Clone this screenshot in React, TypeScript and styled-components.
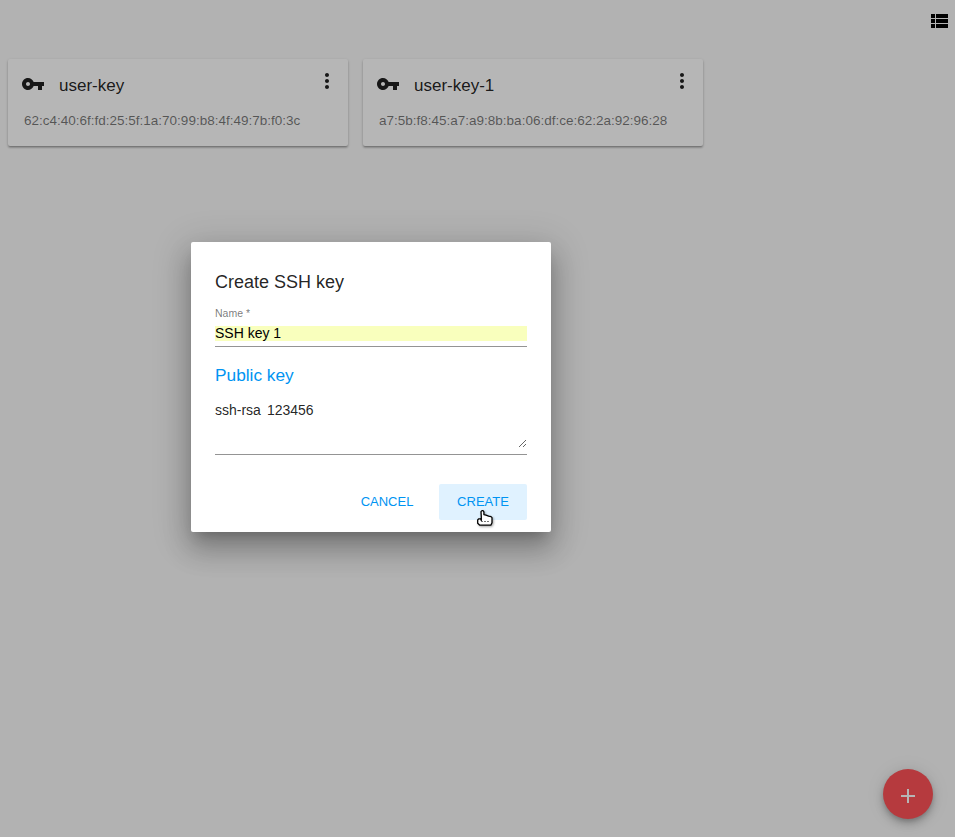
import React from 'react';
import styled, { createGlobalStyle } from 'styled-components';

const GlobalStyle = createGlobalStyle`
  *, *::before, *::after { box-sizing: border-box; }
  html, body { margin: 0; height: 100%; overflow: hidden; }
  body {
    background: #fafafa;
    color: rgba(0, 0, 0, 0.87);
    font-family: "Liberation Sans", Arial, sans-serif;
  }
  button { border: 0; padding: 0; background: none; font-family: inherit; color: inherit; cursor: pointer; }
`;

const Page = styled.div`
  position: relative;
  height: 100vh;
  overflow: hidden;
`;

const Toolbar = styled.header`
  display: flex;
  justify-content: flex-end;
  align-items: flex-start;
  height: 59px;
  padding: 9px 3px 0 0;
`;

const ViewToggle = styled.button`
  display: flex;
  color: #000;
`;

const CardGrid = styled.main`
  display: flex;
  gap: 15px;
  padding: 0 8px;
`;

const Card = styled.article`
  width: 340px;
  height: 87px;
  padding: 13px 9px 0 13px;
  background: #fff;
  border-radius: 2px;
  box-shadow: 0 1px 3px 0 rgba(0, 0, 0, 0.2), 0 2px 2px 0 rgba(0, 0, 0, 0.14),
    0 2px 1px -1px rgba(0, 0, 0, 0.12);
`;

const CardHeader = styled.div`
  display: flex;
  align-items: flex-start;
  height: 40px;
`;

const CardTitle = styled.h2`
  flex: 1;
  margin: 4px 0 0 14px;
  font-size: 17px;
  font-weight: 400;
  line-height: 20px;
`;

const MenuButton = styled.button`
  display: flex;
  margin-top: -3px;
`;

const Fingerprint = styled.p`
  margin: 0 0 0 3px;
  font-size: 13.5px;
  line-height: 18px;
  color: rgba(0, 0, 0, 0.54);
  white-space: nowrap;
`;

const AddButton = styled.button`
  position: absolute;
  right: 22px;
  bottom: 18px;
  display: grid;
  place-items: center;
  width: 50px;
  height: 50px;
  padding-top: 4px;
  border-radius: 50%;
  background: #ff5257;
  box-shadow: 0 3px 5px -1px rgba(0, 0, 0, 0.2), 0 6px 10px 0 rgba(0, 0, 0, 0.14),
    0 1px 18px 0 rgba(0, 0, 0, 0.12);
`;

const Backdrop = styled.div`
  position: absolute;
  inset: 0;
  background: rgba(0, 0, 0, 0.288);
`;

const Dialog = styled.form`
  position: absolute;
  left: 191px;
  top: 242px;
  display: flex;
  flex-direction: column;
  width: 360px;
  height: 290px;
  padding: 28px 24px 12px;
  background: #fff;
  border-radius: 2px;
  box-shadow: 0 9px 12px -6px rgba(0, 0, 0, 0.2), 0 17px 27px 2px rgba(0, 0, 0, 0.2),
    0 7px 36px 6px rgba(0, 0, 0, 0.14);
`;

const DialogTitle = styled.h1`
  margin: 0;
  font-size: 18px;
  font-weight: 400;
  line-height: 24px;
`;

const NameField = styled.div`
  display: flex;
  flex-direction: column;
  height: 53px;
  padding-top: 13px;
  border-bottom: 1px solid #949494;
`;

const NameLabel = styled.label`
  font-size: 10.5px;
  line-height: 12px;
  height: 19px;
  color: rgba(0, 0, 0, 0.54);
`;

const NameInput = styled.input`
  width: 100%;
  height: 15px;
  padding: 0;
  border: 0;
  outline: 0;
  background: #f9ffbd;
  color: #000;
  font: 14px/15px "Liberation Sans", Arial, sans-serif;
`;

const KeyField = styled.div`
  height: 108px;
  padding-top: 17px;
  border-bottom: 1px solid #949494;
`;

const KeyLabel = styled.label`
  display: block;
  height: 38px;
  font-size: 17.3px;
  line-height: 22px;
  color: #0094f2;
`;

const KeyInput = styled.textarea`
  display: block;
  width: 100%;
  height: 46px;
  padding: 0;
  border: 0;
  outline: 0;
  resize: vertical;
  overflow: auto;
  background: transparent;
  color: rgba(0, 0, 0, 0.87);
  font: 14px/16px "Liberation Sans", Arial, sans-serif;
  word-spacing: -0.9px;
`;

const Actions = styled.div`
  display: flex;
  justify-content: flex-end;
  gap: 8px;
  margin-top: auto;
`;

const ActionButton = styled.button<{ $active?: boolean }>`
  width: 88px;
  height: 36px;
  padding-bottom: 2px;
  border-radius: 2px;
  font-size: 13px;
  color: #0094f2;
  background: ${({ $active }) => ($active ? '#e0f2ff' : 'transparent')};
`;

const Pointer = styled.svg`
  position: absolute;
  left: 476px;
  top: 509px;
  filter: drop-shadow(1px 1px 1px rgba(0, 0, 0, 0.35));
`;

const keys = [
  { name: 'user-key', fingerprint: '62:c4:40:6f:fd:25:5f:1a:70:99:b8:4f:49:7b:f0:3c' },
  { name: 'user-key-1', fingerprint: 'a7:5b:f8:45:a7:a9:8b:ba:06:df:ce:62:2a:92:96:28' },
];

const Icon = ({ path, size = 24 }: { path: string; size?: number }) => (
  <svg width={size} height={size} viewBox="0 0 24 24" fill="currentColor" aria-hidden="true">
    <path d={path} />
  </svg>
);

const icons = {
  list: 'M3 14h4v-4H3v4zm0 5h4v-4H3v4zM3 9h4V5H3v4zm5 5h12v-4H8v4zm0 5h12v-4H8v4zM8 5v4h12V5H8z',
  key: 'M12.65 10C11.83 7.67 9.61 6 7 6c-3.31 0-6 2.69-6 6s2.69 6 6 6c2.61 0 4.83-1.67 5.65-4H17v4h4v-4h2v-4H12.65zM7 14c-1.1 0-2-.9-2-2s.9-2 2-2 2 .9 2 2-.9 2-2 2z',
  more: 'M12 8c1.1 0 2-.9 2-2s-.9-2-2-2-2 .9-2 2 .9 2 2 2zm0 2c-1.1 0-2 .9-2 2s.9 2 2 2 2-.9 2-2-.9-2-2-2zm0 6c-1.1 0-2 .9-2 2s.9 2 2 2 2-.9 2-2-.9-2-2-2z',
};

export default function App() {
  return (
    <Page>
      <GlobalStyle />
      <Toolbar>
        <ViewToggle aria-label="List view"><Icon path={icons.list} /></ViewToggle>
      </Toolbar>
      <CardGrid>
        {keys.map((key) => (
          <Card key={key.name}>
            <CardHeader>
              <Icon path={icons.key} />
              <CardTitle>{key.name}</CardTitle>
              <MenuButton aria-label="Actions"><Icon path={icons.more} /></MenuButton>
            </CardHeader>
            <Fingerprint>{key.fingerprint}</Fingerprint>
          </Card>
        ))}
      </CardGrid>
      <AddButton aria-label="Create">
        <svg width="14" height="14" viewBox="0 0 14 14"><path d="M6 0h2v6h6v2H8v6H6V8H0V6h6z" fill="#fff" /></svg>
      </AddButton>
      <Backdrop />
      <Dialog>
        <DialogTitle>Create SSH key</DialogTitle>
        <NameField>
          <NameLabel htmlFor="key-name">Name *</NameLabel>
          <NameInput id="key-name" defaultValue="SSH key 1" />
        </NameField>
        <KeyField>
          <KeyLabel htmlFor="public-key">Public key</KeyLabel>
          <KeyInput id="public-key" spellCheck={false} defaultValue="ssh-rsa  123456" />
        </KeyField>
        <Actions>
          <ActionButton type="button">CANCEL</ActionButton>
          <ActionButton type="button" $active>CREATE</ActionButton>
        </Actions>
      </Dialog>
      <Pointer width="18" height="19" viewBox="0 0 18 19" aria-hidden="true">
        <path
          d="M5.3 11.5L4.6 9.8H2.6L1.7 11V14.2L3.8 16.2H14.8L16 13.8V8.6L15 7.6L12.6 7.2L10 6.2L7.9 5.6V2.8L7 1.6H6L5 2.6L5.3 8Z"
          fill="#fff"
          stroke="#000"
          strokeWidth="1.3"
          strokeLinejoin="round"
        />
        <path d="M5 12.5h9" stroke="#777" strokeDasharray="2 1" />
      </Pointer>
    </Page>
  );
}
